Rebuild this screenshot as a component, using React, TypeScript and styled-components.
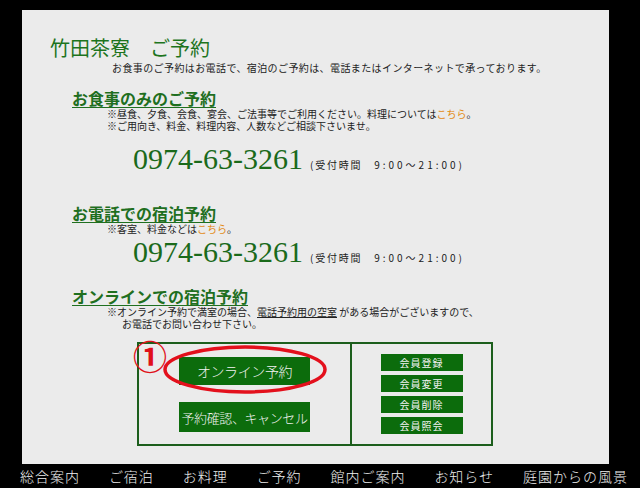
import React from "react";
import styled, { createGlobalStyle } from "styled-components";

const GlobalStyle = createGlobalStyle`
  html, body {
    margin: 0;
    padding: 0;
    background: #000;
  }
  body {
    font-family: "Noto Sans CJK JP", "Noto Sans", sans-serif;
  }
`;

const Page = styled.div`
  width: 640px;
  height: 488px;
  background: #000;
  padding-top: 10px;
  box-sizing: border-box;
  overflow: hidden;
`;

const Panel = styled.main`
  margin-left: 22px;
  width: 587px;
  height: 454px;
  background: #ebebeb;
  box-sizing: border-box;
  padding: 26px 0 0 28px;
`;

const Title = styled.h1`
  margin: 0;
  font-size: 20px;
  line-height: 24px;
  font-weight: 400;
  color: #1d741d;
  white-space: pre;
`;

const Lead = styled.p`
  margin: 1px 0 0 62px;
  font-size: 10px;
  line-height: 14px;
  letter-spacing: 0.4px;
  color: #222;
`;

const Section = styled.section<{ $top: number }>`
  margin-top: ${({ $top }) => $top}px;
  padding-left: 22px;
`;

const SectionTitle = styled.h2`
  display: block;
  width: fit-content;
  margin: 0;
  font-size: 16px;
  line-height: 20px;
  font-weight: 700;
  color: #1f6f1f;
  text-decoration: underline;
  text-underline-offset: 2px;
`;

const Note = styled.p<{ $indent?: number }>`
  margin: 0 0 0 ${({ $indent }) => $indent ?? 35}px;
  font-size: 10px;
  line-height: 12px;
  color: #222;
`;

const Kochira = styled.span`
  color: #e38a14;
`;

const Underlined = styled.span`
  text-decoration: underline;
`;

const PhoneRow = styled.div<{ $top: number }>`
  margin: ${({ $top }) => $top}px 0 0 61px;
  display: flex;
  align-items: baseline;
  gap: 7px;
`;

const Phone = styled.span`
  font-family: "Liberation Serif", "Times New Roman", serif;
  font-size: 30px;
  line-height: 30px;
  color: #1a6a1a;
`;

const Hours = styled.span`
  font-size: 10px;
  line-height: 12px;
  letter-spacing: 1.8px;
  color: #222;
  white-space: pre;
`;

const Time = styled.span`
  letter-spacing: 3px;
`;

const BookingBox = styled.div`
  position: relative;
  margin: 12px 0 0 65px;
  width: 356px;
  height: 104px;
  box-sizing: border-box;
  border: 2px solid #1c5e1c;
  display: grid;
  grid-template-columns: 213px 1fr;
`;

const LeftCell = styled.div`
  border-right: 2px solid #1c5e1c;
  display: flex;
  flex-direction: column;
  align-items: center;
  padding-top: 13px;
  gap: 17px;
`;

const RightCell = styled.div`
  display: flex;
  flex-direction: column;
  align-items: center;
  justify-content: center;
  gap: 4px;
`;

const BigButton = styled.button<{ $h: number; $size: number }>`
  width: 131px;
  height: ${({ $h }) => $h}px;
  border: none;
  padding: 0;
  background: #0c6c0c;
  color: #f2f2f2;
  font-family: "Noto Sans CJK JP", sans-serif;
  font-size: ${({ $size }) => $size}px;
  font-weight: 300;
  letter-spacing: -0.4px;
  white-space: nowrap;
  cursor: pointer;
`;

const SmallButton = styled.button`
  width: 82px;
  height: 17px;
  border: none;
  padding: 0;
  background: #0c6c0c;
  color: #f2f2f2;
  font-family: "Noto Sans CJK JP", sans-serif;
  font-size: 10px;
  line-height: 17px;
  letter-spacing: 1px;
  cursor: pointer;
`;

const Marker = styled.span`
  position: absolute;
  left: -6px;
  top: -5px;
  font-size: 34px;
  line-height: 34px;
  font-weight: 700;
  color: #e0101a;
`;

const Ring = styled.svg`
  position: absolute;
  left: 23px;
  top: 0px;
  pointer-events: none;
`;

const Nav = styled.nav`
  display: flex;
  justify-content: space-between;
  padding: 1px 12px 0 20px;
`;

const NavItem = styled.a`
  font-size: 14px;
  line-height: 22px;
  letter-spacing: 1px;
  font-weight: 300;
  color: #f0f0f0;
  text-decoration: none;
`;

const navLinks = [
  "総合案内",
  "ご宿泊",
  "お料理",
  "ご予約",
  "館内ご案内",
  "お知らせ",
  "庭園からの風景",
];

const memberActions = ["会員登録", "会員変更", "会員削除", "会員照会"];

function Reception() {
  return (
    <Hours>
      (受付時間　<Time>9:00～21:00</Time>)
    </Hours>
  );
}

export default function App() {
  return (
    <Page>
      <GlobalStyle />
      <Panel>
        <Title>竹田茶寮　ご予約</Title>
        <Lead>
          お食事のご予約はお電話で、宿泊のご予約は、電話またはインターネットで承っております。
        </Lead>

        <Section $top={13}>
          <SectionTitle>お食事のみのご予約</SectionTitle>
          <Note>
            ※昼食、夕食、会食、宴会、ご法事等でご利用ください。料理については
            <Kochira>こちら</Kochira>。
          </Note>
          <Note>※ご用向き、料金、料理内容、人数などご相談下さいませ。</Note>
          <PhoneRow $top={12}>
            <Phone>0974-63-3261</Phone>
            <Reception />
          </PhoneRow>
        </Section>

        <Section $top={29}>
          <SectionTitle>お電話での宿泊予約</SectionTitle>
          <Note>
            ※客室、料金などは<Kochira>こちら</Kochira>。
          </Note>
          <PhoneRow $top={2}>
            <Phone>0974-63-3261</Phone>
            <Reception />
          </PhoneRow>
        </Section>

        <Section $top={19}>
          <SectionTitle>オンラインでの宿泊予約</SectionTitle>
          <Note>
            ※オンライン予約で満室の場合、<Underlined>電話予約用の空室</Underlined> がある場合がございますので、
          </Note>
          <Note $indent={50}>お電話でお問い合わせ下さい。</Note>

          <BookingBox>
            <LeftCell>
              <BigButton $h={28} $size={14}>オンライン予約</BigButton>
              <BigButton $h={30} $size={13}>予約確認、キャンセル</BigButton>
            </LeftCell>
            <RightCell>
              {memberActions.map((label) => (
                <SmallButton key={label}>{label}</SmallButton>
              ))}
            </RightCell>
            <Marker>①</Marker>
            <Ring width="166" height="51" viewBox="0 0 166 51">
              <ellipse cx="83" cy="25.5" rx="80" ry="22.5" fill="none" stroke="#e3101c" strokeWidth="3.5" />
            </Ring>
          </BookingBox>
        </Section>
      </Panel>
      <Nav>
        {navLinks.map((name) => (
          <NavItem key={name} href="#">
            {name}
          </NavItem>
        ))}
      </Nav>
    </Page>
  );
}
